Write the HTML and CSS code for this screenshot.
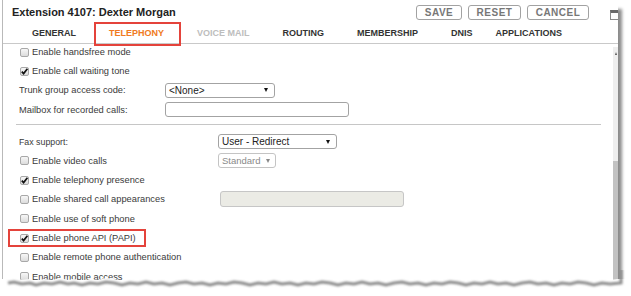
FILE: index.html
```html
<!DOCTYPE html>
<html lang="en">
<head>
    <meta charset="UTF-8">
    <title>Extension 4107</title>
    <link rel="stylesheet" href="styles.css">
</head>
<body>

    <div class="frame">
        <div class="panel">

            <!-- Title and actions -->
            <div class="head">
                <h1 class="title">Extension 4107: Dexter Morgan</h1>
                <div class="actions">
                    <button class="btn btn-save">SAVE</button>
                    <button class="btn btn-reset">RESET</button>
                    <button class="btn btn-cancel">CANCEL</button>
                    <span class="winicon"></span>
                </div>
            </div>

            <!-- Tabs -->
            <div class="tabs">
                <span class="tab">GENERAL</span>
                <span class="tab active">TELEPHONY</span>
                <span class="tab disabled">VOICE MAIL</span>
                <span class="tab">ROUTING</span>
                <span class="tab">MEMBERSHIP</span>
                <span class="tab">DNIS</span>
                <span class="tab last">APPLICATIONS</span>
            </div>

            <div class="body">
                <div class="form">

                    <div class="section first">
                        <div class="row">
                            <label class="lbl"><span class="cb"></span>Enable handsfree mode</label>
                        </div>
                        <div class="row">
                            <label class="lbl"><span class="cb on"><svg viewBox="0 0 9 9"><path d="M1.8 4.6 L3.6 6.6 L7.4 1.8"/></svg></span>Enable call waiting tone</label>
                        </div>
                        <div class="row">
                            <label class="lbl plain">Trunk group access code:</label>
                            <div class="select s-none"><span>&lt;None&gt;</span><i class="arr"></i></div>
                        </div>
                        <div class="row">
                            <label class="lbl plain">Mailbox for recorded calls:</label>
                            <div class="input i-mailbox"></div>
                        </div>
                    </div>

                    <div class="sep"></div>

                    <div class="section second">
                        <div class="row">
                            <label class="lbl plain small">Fax support:</label>
                            <div class="select s-fax"><span>User - Redirect</span><i class="arr"></i></div>
                        </div>
                        <div class="row">
                            <label class="lbl"><span class="cb"></span>Enable video calls</label>
                            <div class="select s-std off"><span>Standard</span><i class="arr"></i></div>
                        </div>
                        <div class="row">
                            <label class="lbl"><span class="cb on"><svg viewBox="0 0 9 9"><path d="M1.8 4.6 L3.6 6.6 L7.4 1.8"/></svg></span>Enable telephony presence</label>
                        </div>
                        <div class="row">
                            <label class="lbl"><span class="cb"></span>Enable shared call appearances</label>
                            <div class="input i-shared off"></div>
                        </div>
                        <div class="row">
                            <label class="lbl"><span class="cb"></span>Enable use of soft phone</label>
                        </div>
                        <div class="row marked">
                            <label class="lbl"><span class="cb on"><svg viewBox="0 0 9 9"><path d="M1.8 4.6 L3.6 6.6 L7.4 1.8"/></svg></span>Enable phone API (PAPI)</label>
                        </div>
                        <div class="row">
                            <label class="lbl"><span class="cb"></span>Enable remote phone authentication</label>
                        </div>
                        <div class="row">
                            <label class="lbl"><span class="cb"></span>Enable mobile access</label>
                        </div>
                    </div>

                </div>

                <div class="scrollbar">
                    <span class="sb-arrow"></span>
                    <span class="sb-thumb"></span>
                </div>
            </div>
        </div>

        <!-- Bord déchiré de la capture -->
        <svg class="torn" width="631" height="26" viewBox="0 1 631 26">
            <defs>
                <filter id="blur" x="-5%" y="-50%" width="110%" height="200%">
                    <feGaussianBlur stdDeviation="1.1"/>
                </filter>
            </defs>
            <path fill="#fff" d="M0,10 L8,10 L14,9 L22,11 L30,10 L36,12 L44,10 L52,11 L60,9 L68,11 L74,10 L82,12 L90,10 L98,11 L106,9 L114,10 L122,12 L130,10 L138,11 L146,9 L154,11 L162,10 L170,12 L178,10 L186,9 L194,11 L202,10 L210,12 L218,10 L226,11 L234,9 L242,10 L250,12 L258,10 L266,11 L274,9 L282,11 L290,10 L298,12 L306,10 L314,11 L322,9 L330,10 L338,12 L346,10 L354,11 L362,9 L370,11 L378,10 L386,12 L394,10 L402,9 L410,11 L418,10 L426,12 L434,10 L442,11 L450,9 L458,10 L466,12 L474,10 L482,11 L490,9 L498,11 L506,10 L514,12 L522,10 L530,9 L538,11 L546,10 L554,12 L562,10 L570,11 L578,9 L586,10 L594,12 L602,10 L610,11 L618,10 L631,10 L631,30 L0,30 Z"/>
            <path fill="none" stroke="#8d8d8d" stroke-width="3" filter="url(#blur)" d="M8,14 L14,13 L22,15 L30,14 L36,16 L44,14 L52,15 L60,13 L68,15 L74,14 L82,16 L90,14 L98,15 L106,13 L114,14 L122,16 L130,14 L138,15 L146,13 L154,15 L162,14 L170,16 L178,14 L186,13 L194,15 L202,14 L210,16 L218,14 L226,15 L234,13 L242,14 L250,16 L258,14 L266,15 L274,13 L282,15 L290,14 L298,16 L306,14 L314,15 L322,13 L330,14 L338,16 L346,14 L354,15 L362,13 L370,15 L378,14 L386,16 L394,14 L402,13 L410,15 L418,14 L426,16 L434,14 L442,15 L450,13 L458,14 L466,16 L474,14 L482,15 L490,13 L498,15 L506,14 L514,16 L522,14 L530,13 L538,15 L546,14 L554,16 L562,14 L570,15 L578,13 L586,14 L594,16 L602,14 L610,15 L621,14 L621,0"/>
        </svg>
    </div>

</body>
</html>
```

FILE: styles.css
```css
/* Page */
body {
    margin: 0;
    background: #fff;
    font-family: "Liberation Sans", Arial, sans-serif;
    color: #3a3a3a;
}

.frame {
    position: relative;
    width: 631px;
    height: 296px;
    overflow: hidden;
}

.panel {
    margin-left: 2px;
    width: 615px;
    height: 320px;
    border-left: 1px solid #b9b9b9;
    background: #fff;
    box-shadow: 4px 9px 3px rgba(0, 0, 0, 0.45);
    display: flex;
    flex-direction: column;
    overflow: hidden;
}

/* Titre + boutons */
.head {
    height: 24px;
    display: flex;
    align-items: center;
    padding-left: 9px;
}

.title {
    flex: 1;
    margin: 0;
    font-size: 11px;
    font-weight: bold;
    color: #222;
}

.actions {
    display: flex;
    align-items: center;
    gap: 6px;
}

.btn {
    height: 15px;
    padding: 0;
    border: 1px solid #a2a2a2;
    border-radius: 3px;
    background: #fff;
    font-family: "Liberation Sans Narrow", "Liberation Sans", sans-serif;
    font-size: 10px;
    font-weight: bold;
    letter-spacing: 0.5px;
    color: #777;
    line-height: 13px;
}
.btn-save { width: 46px; }
.btn-reset { width: 53px; }
.btn-cancel { width: 62px; }

.winicon {
    align-self: flex-start;
    margin-top: 5px;
    margin-left: 15px;
    width: 7px;
    height: 6px;
    border: 1px solid #8a8a8a;
    border-top: 3px solid #6a6a6a;
    border-right: none;
}

/* Onglets */
.tabs {
    height: 19px;
    display: flex;
    gap: 33px;
    padding-left: 29px;
    border-bottom: 1px solid #c9c9c9;
    font-size: 9px;
    font-weight: bold;
    line-height: 19px;
    color: #333;
}

.tab {
    position: relative;
}
.tab.last {
    margin-left: -10px;
}
.tab.active {
    color: #f07a22;
}
.tab.active::after {
    content: "";
    position: absolute;
    top: -2px;
    bottom: -3px;
    left: -15px;
    right: -17px;
    border: 2px solid #e4433b;
}
.tab.disabled {
    color: #bdbdbd;
}

/* Corps */
.body {
    flex: 1;
    display: flex;
}

.form {
    flex: 1;
    padding: 0 12px 0 17px;
}

.section.first {
    margin-top: -1.5px;
}
.section.first .row {
    height: 19.2px;
    grid-template-columns: 145px auto;
}
.section.second {
    padding-top: 6.7px;
}
.section.second .row {
    height: 19.3px;
    grid-template-columns: 198px auto;
}

.row {
    position: relative;
    display: grid;
    align-items: center;
    justify-items: start;
}

.row.marked::after {
    content: "";
    position: absolute;
    top: 0.5px;
    bottom: 0.5px;
    left: -12px;
    width: 138px;
    border: 2px solid #e4433b;
    box-sizing: border-box;
}

.lbl {
    display: flex;
    align-items: center;
    gap: 3px;
    font-size: 9.3px;
    white-space: nowrap;
}
.lbl.plain {
    margin-left: -1px;
}
.lbl.small {
    font-size: 8.8px;
}

.cb {
    width: 9px;
    height: 9px;
    box-sizing: border-box;
    border: 1px solid #a8a8a8;
    border-radius: 2px;
    background: linear-gradient(#f7f7f7, #dcdcdc);
    display: flex;
}
.cb svg {
    width: 9px;
    height: 9px;
    margin: -1px;
}
.cb svg path {
    fill: none;
    stroke: #111;
    stroke-width: 1.7;
}

.sep {
    margin: 5px 0 0 -4px;
    border-top: 1px solid #c6c6c6;
}

/* Champs */
.select,
.input {
    box-sizing: border-box;
    border: 1px solid #a3a3a3;
    border-radius: 3px;
    background: #fff;
}

.select {
    display: flex;
    align-items: center;
    justify-content: space-between;
    padding: 0 6px 0 3px;
    font-size: 10px;
    color: #222;
}
.arr {
    width: 0;
    height: 0;
    border-left: 2.5px solid transparent;
    border-right: 2.5px solid transparent;
    border-top: 4px solid #111;
}

.s-none { width: 110px; height: 15px; }
.s-fax { width: 119px; height: 15px; }
.s-std { width: 58px; height: 15px; padding-right: 5px; font-size: 9.5px; }
.select.off { color: #8a8a8a; border-color: #c4c4c4; }
.select.off .arr { border-top-color: #888; }

.i-mailbox { width: 184px; height: 15px; }
.i-shared {
    width: 184px;
    height: 16px;
    margin-left: 2px;
}
.input.off {
    background: #ebebe5;
    border-color: #c6c6c6;
}

/* Barre de défilement */
.scrollbar {
    width: 5px;
    margin-top: 3px;
    background: #eeeeee;
    display: flex;
    flex-direction: column;
    align-items: center;
}
.sb-arrow {
    margin-top: 5px;
    width: 0;
    height: 0;
    border-left: 1.5px solid transparent;
    border-right: 1.5px solid transparent;
    border-bottom: 3px solid #555;
}
.sb-thumb {
    align-self: stretch;
    margin-top: 106px;
    flex: 1;
    background: #c2c2c2;
}

/* Bord déchiré */
.torn {
    position: absolute;
    left: 0;
    bottom: 0;
}
```
